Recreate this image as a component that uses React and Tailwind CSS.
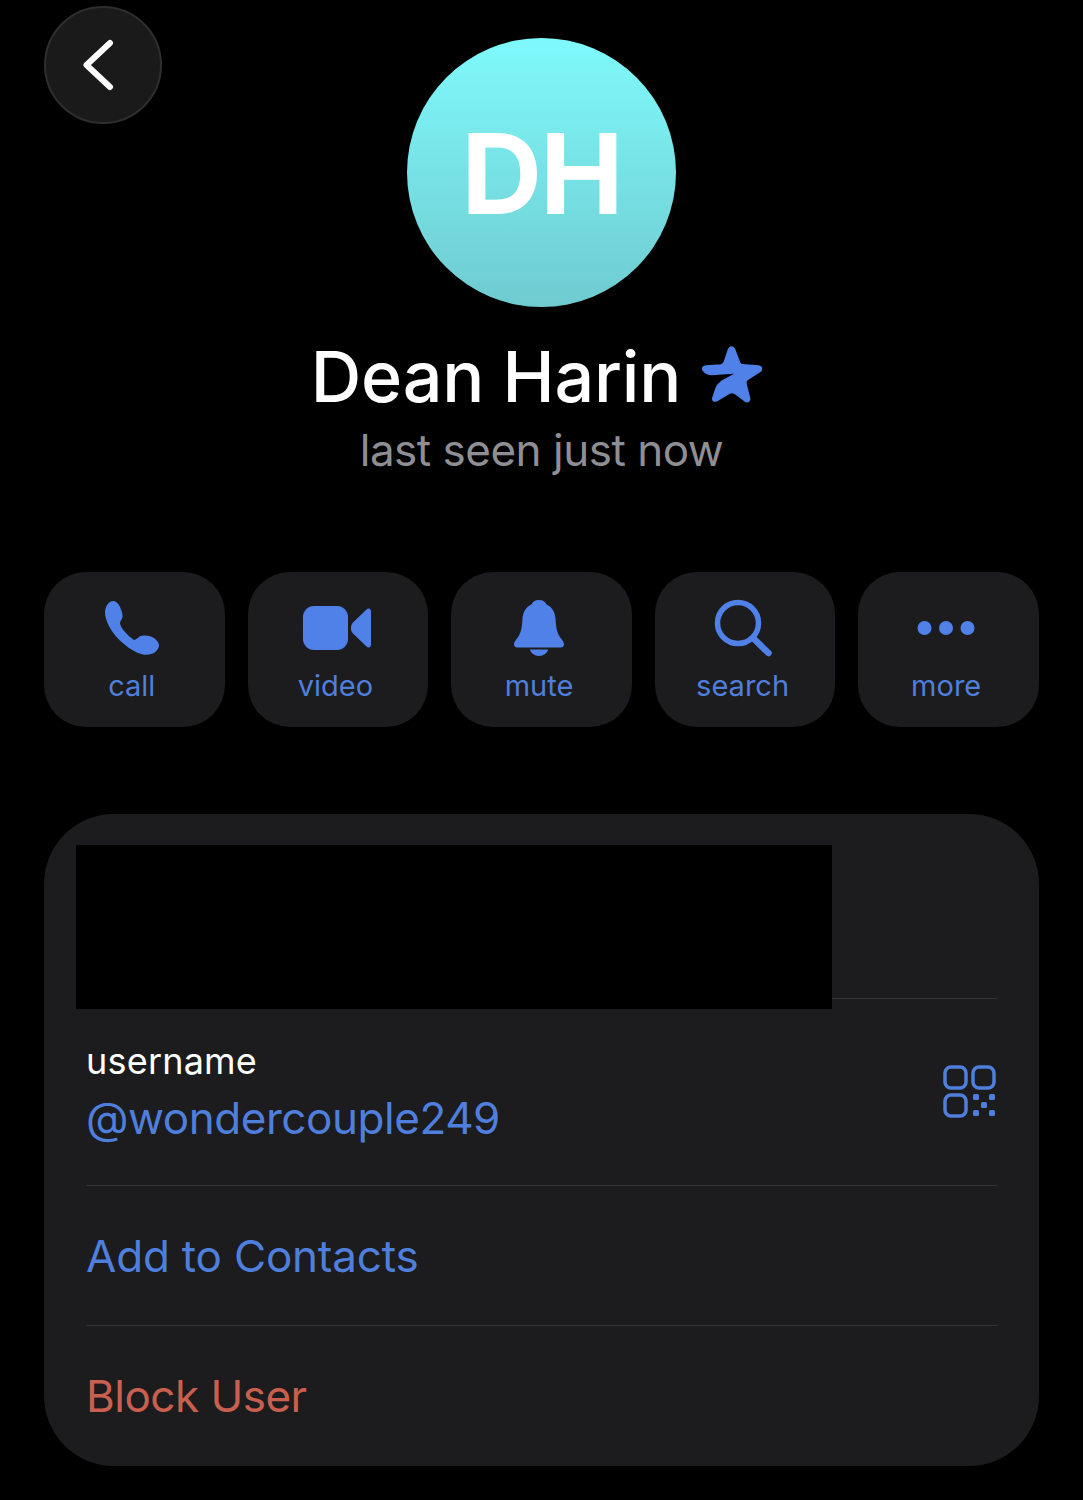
const BLUE = "#4f81e8";

function Phone() {
  return (
    <svg width="54" height="55" viewBox="0 0 54 55" fill="none">
      <path d="M8 0C11 0 13.500 2.500 14.800 5.500 16.500 9.500 18 13 17.500 16 17 18.500 15 20 15 22.500 15.500 25.500 18 29 20.500 31.500 23 34.500 26.500 37.500 29 39 31 38.500 33 36.500 35.500 35 38.500 34 42.500 34.500 46 35.500 50 37 54 41 54 44.500 54 48 50.500 51.500 47 52.800 44 54 40.500 54.200 37 53.300 31 51.500 24.500 48 19 43 13 38.500 8 32.500 4.500 26 1.500 20.500 0 15.500 0 11.500 0 6 3.500 0 8 0Z" fill={BLUE} />
    </svg>
  );
}
function Video() {
  return (
    <svg width="70" height="46" viewBox="0 0 70 46" fill="none" className="ml-[4px]">
      <rect x="1" y="1" width="45" height="44" rx="11" fill={BLUE} />
      <path d="M51 17.500 64.500 4.500C66.500 2.700 69 3.800 69 6.300V39.700C69 42.200 66.500 43.300 64.500 41.500L51 28.500C49.500 27 49 25.500 49 23 49 20.500 49.500 19 51 17.500Z" fill={BLUE} />
    </svg>
  );
}
function Bell() {
  return (
    <svg width="50" height="56" viewBox="0 0 50 56" fill="none">
      <path d="M25 0C29 0 31.500 2 32.500 4.500 38 7 41 12 41.500 18.500 42 26 42.500 31 45 35.500 46.500 38.500 50 41 50 44.500 50 46.500 48.500 47.500 46.500 47.500H3.500C1.500 47.500 0 46.500 0 44.500 0 41 3.500 38.500 5 35.500 7.500 31 8 26 8.500 18.500 9 12 12 7 17.500 4.500 18.500 2 21 0 25 0Z" fill={BLUE} />
      <path d="M16 49.500H34C33.500 53 29.500 56 25 56S16.500 53 16 49.500Z" fill={BLUE} />
    </svg>
  );
}
function Search() {
  return (
    <svg width="58" height="58" viewBox="0 0 58 58" fill="none" stroke={BLUE} strokeLinecap="round">
      <circle cx="24" cy="24" r="20.500" strokeWidth="5.500" />
      <path d="M39 39 54.500 54" strokeWidth="6.500" />
    </svg>
  );
}
function Dots() {
  return (
    <svg width="58" height="16" viewBox="0 0 58 16" fill={BLUE}>
      <circle cx="7.500" cy="8" r="7" />
      <circle cx="29" cy="8" r="7" />
      <circle cx="50.500" cy="8" r="7" />
    </svg>
  );
}
function Qr() {
  return (
    <svg width="54" height="54" viewBox="0 0 54 54" fill="none">
      <rect x="2" y="2" width="21" height="21" rx="6" stroke="#4f7fdc" strokeWidth="3.500" />
      <rect x="30" y="2" width="21" height="21" rx="6" stroke="#4f7fdc" strokeWidth="3.500" />
      <rect x="2" y="30" width="21" height="21" rx="6" stroke="#4f7fdc" strokeWidth="3.500" />
      <g fill="#4f7fdc">
        <rect x="30" y="29" width="6" height="6" rx="1.500" />
        <rect x="46" y="29" width="6" height="6" rx="1.500" />
        <rect x="38" y="37" width="6" height="6" rx="1.500" />
        <rect x="30" y="45" width="6" height="6" rx="1.500" />
        <rect x="46" y="45" width="6" height="6" rx="1.500" />
      </g>
    </svg>
  );
}
function Star() {
  return (
    <svg width="60" height="58" viewBox="0 0 60 58" fill="none">
      <path d="M29.500 1C31.500 1 32.500 3 33.200 5L37.500 16.500C38 18 39 18.700 40.500 18.800L56.500 20C59.500 20.300 60.500 23 58.500 25L46 33C44 34.500 43.500 36 44 38L47.500 52C48 55.500 45.500 56.500 43 55L33 47.500C31 46 29.500 46 27.500 47L15 54.500C12 56 10 54.500 11 51.500L14 42.500C15 39.500 17 37.500 19.500 35.500L32.500 28.500C33.500 27.500 33 26.800 31.500 27L9.500 28.500C6 28.500 2.500 26 1 24 0 21.500 1.500 20.200 4 20L18.500 19C20.500 18.800 21.500 18 22.300 16L26 5C26.700 3 27.700 1 29.500 1Z" fill="#4f81e8" stroke="#4f81e8" strokeWidth="1.500" strokeLinejoin="round" />
    </svg>
  );
}
function Chevron() {
  return (
    <svg width="32" height="54" viewBox="0 0 32 54" fill="none">
      <path d="M27 5 3.500 27 27 49" stroke="#fff" strokeWidth="6" strokeLinecap="round" strokeLinejoin="round" />
    </svg>
  );
}

const actions = [
  { label: "call", icon: <Phone /> },
  { label: "video", icon: <Video /> },
  { label: "mute", icon: <Bell /> },
  { label: "search", icon: <Search /> },
  { label: "more", icon: <Dots /> },
];

export default function App() {
  return (
    <div className="relative h-[1500px] w-[1083px] overflow-hidden bg-black font-['Inter',sans-serif] text-white">
      <button className="absolute left-[44px] top-[6px] flex h-[118px] w-[118px] items-center justify-center rounded-full border-2 border-[#2e2e2e] bg-[#1a1a1b] pr-2">
        <Chevron />
      </button>

      <header className="flex flex-col items-center pt-[38px]">
        <div className="flex h-[269px] w-[269px] items-center justify-center rounded-full bg-gradient-to-b from-[#7ffafc] to-[#6fcbd0]">
          <span className="text-[112px] font-bold leading-none tracking-[-2px] text-white">DH</span>
        </div>
        <div className="mt-[28px] mr-[10px] flex h-[84px] items-center gap-[21px]">
          <h1 className="text-[70px] font-medium leading-none tracking-[-0.200px]">Dean Harin</h1>
          <div className="mb-[5px]">
            <Star />
          </div>
        </div>
        <p className="mt-[5px] text-[44px] leading-[52px] tracking-[-0.500px] text-[#8e8e93]">last seen just now</p>
      </header>

      <div className="mt-[96px] flex gap-[23px] px-[44px]">
        {actions.map((a) => (
          <div key={a.label} className="flex h-[155px] w-[181px] flex-col items-center rounded-[42px] bg-[#1c1c1e] pr-[5px]">
            <div className="flex h-[92px] w-full items-end justify-center pb-[1px]">
              <div className="flex h-[70px] items-center justify-center">{a.icon}</div>
            </div>
            <span className="mt-[4px] text-[29px] leading-[36px] text-[#4f7fdc]">{a.label}</span>
          </div>
        ))}
      </div>

      <section className="relative mx-[44px] mt-[87px] h-[652px] rounded-[70px] bg-[#1c1c1e]">
        <div className="h-[184px]" />
        <div className="mx-[42px] h-[1px] bg-[#333335]" />
        <div className="mx-[42px] flex h-[186px] items-center justify-between">
          <div>
            <div className="text-[36px] leading-[44px] tracking-[0.200px]">username</div>
            <div className="mt-[7px] text-[44px] leading-[56px] tracking-[-0.450px] text-[#4f7fdc]">@wondercouple249</div>
          </div>
          <Qr />
        </div>
        <div className="mx-[42px] h-[1px] bg-[#333335]" />
        <div className="mx-[42px] flex h-[139px] items-center text-[44px] leading-[56px] tracking-[-0.200px] text-[#4f7fdc]">Add to Contacts</div>
        <div className="mx-[42px] h-[1px] bg-[#333335]" />
        <div className="mx-[42px] flex h-[140px] items-center text-[44px] leading-[56px] tracking-[-0.500px] text-[#c9604f]">Block User</div>
        <div className="absolute left-[32px] top-[31px] h-[164px] w-[756px] bg-black" />
      </section>
    </div>
  );
}
